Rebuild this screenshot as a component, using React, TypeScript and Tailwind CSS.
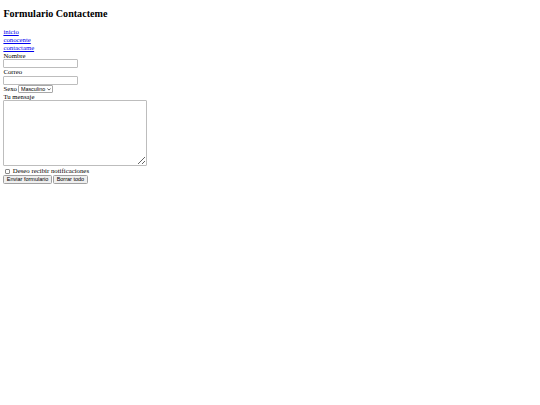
export default function App() {
  return (
    <div className="min-h-[405px] bg-white px-[3.4px] py-[0.1px] font-['Liberation_Serif',serif] text-[6.75px] leading-[1.15] text-black">
      <h2 className="my-[8.4px] text-[10.1px] font-bold">Formulario Contacteme</h2>

      <nav className="flex flex-col items-start">
        <a href="#" className="text-[#0000ee] underline">inicio</a>
        <a href="#" className="text-[#0000ee] underline">conocente</a>
        <a href="#" className="text-[#0000ee] underline">contactame</a>
      </nav>

      <form className="flex flex-col items-start" onSubmit={(e) => e.preventDefault()}>
        <label htmlFor="nombre">Nombre</label>
        <input
          id="nombre"
          type="text"
          className="h-[9px] w-[74.5px] rounded-[1px] border border-[#bdbdbd] bg-white"
        />
        <label htmlFor="correo">Correo</label>
        <input
          id="correo"
          type="email"
          className="h-[9px] w-[74.5px] rounded-[1px] border border-[#bdbdbd] bg-white"
        />
        <div className="flex h-[8px] items-center gap-[1.5px]">
          <label htmlFor="sexo">Sexo</label>
          <div className="relative flex h-[7.5px] w-[35px] items-center rounded-[1px] border border-[#a8a8a8] bg-white">
            <select
              id="sexo"
              className="h-full w-full appearance-none bg-transparent pl-[1.5px] font-['Liberation_Sans',sans-serif] text-[5.4px] leading-none"
            >
              <option>Masculino</option>
              <option>Femenino</option>
            </select>
            <svg viewBox="0 0 10 6" className="pointer-events-none absolute right-[1.5px] h-[2.6px] w-[4px]">
              <path d="M1 1l4 4 4-4" fill="none" stroke="#222" strokeWidth="1.8" />
            </svg>
          </div>
        </div>
        <label htmlFor="mensaje" className="-mt-[0.6px]">Tu mensaje</label>
        <textarea
          id="mensaje"
          className="-mt-[0.6px] h-[66px] w-[144px] resize rounded-[1px] border border-[#bdbdbd] bg-white"
        />
        <label className="mt-[1.5px] flex h-[8px] items-center gap-[2.5px]">
          <span className="ml-[1.4px] h-[5.5px] w-[5.5px] rounded-[1px] border border-[#8a8a8a] bg-white" />
          <span className="text-[6.8px]">Deseo recibir notificaciones</span>
        </label>
        <div className="flex gap-[1.5px]">
          <button
            type="submit"
            className="flex h-[9px] items-center rounded-[1.5px] border border-[#a0a0a0] bg-[#efefef] px-[2.4px] font-['Liberation_Sans',sans-serif] text-[5.5px] leading-none"
          >
            Enviar formulario
          </button>
          <button
            type="reset"
            className="flex h-[9px] items-center rounded-[1.5px] border border-[#a0a0a0] bg-[#efefef] px-[2.4px] font-['Liberation_Sans',sans-serif] text-[5.5px] leading-none"
          >
            Borrar todo
          </button>
        </div>
      </form>
    </div>
  );
}
